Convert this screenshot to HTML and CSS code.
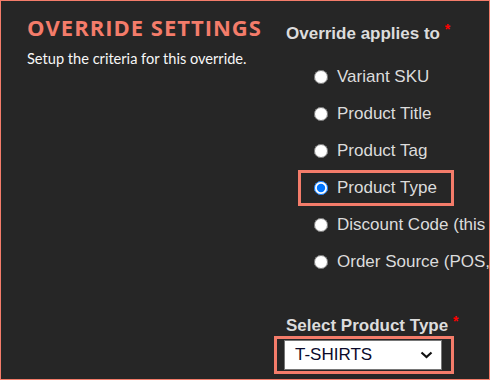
FILE: index.html
```html
<!DOCTYPE html>
<html lang="en">
<head>
    <meta charset="UTF-8">
    <meta name="viewport" content="width=device-width, initial-scale=1.0">
    <title>Override Settings</title>
    <link rel="stylesheet" href="styles.css">
</head>
<body>
    <div class="panel">
        <div class="intro">
            <h2>OVERRIDE SETTINGS</h2>
            <p>Setup the criteria for this override.</p>
        </div>

        <div class="form">
            <div class="field-label">Override applies to <span class="req">*</span></div>
            <ul class="options">
                <li><label><input type="radio" name="applies"> Variant SKU</label></li>
                <li><label><input type="radio" name="applies"> Product Title</label></li>
                <li><label><input type="radio" name="applies"> Product Tag</label></li>
                <li class="marked"><label><input type="radio" name="applies" checked> Product Type</label></li>
                <li><label><input type="radio" name="applies"> Discount Code (this</label></li>
                <li><label><input type="radio" name="applies"> Order Source (POS,</label></li>
            </ul>

            <div class="field-label select-label">Select Product Type <span class="req">*</span></div>
            <div class="select-box">
                <div class="select">
                    <span>T-SHIRTS</span>
                    <svg width="13" height="8" viewBox="0 0 13 8"><path d="M1.5 1.5 L6.5 6 L11.5 1.5" fill="none" stroke="#111" stroke-width="2.2"/></svg>
                </div>
            </div>
        </div>
    </div>
</body>
</html>
```

FILE: styles.css
```css
* {
    margin: 0;
    padding: 0;
    box-sizing: border-box;
}

body {
    background: #262626;
}

/* Outer frame */
.panel {
    width: 490px;
    height: 380px;
    border: 1px solid #f47c6a;
    background: #262626;
    display: flex;
    overflow: hidden;
}

.intro {
    width: 284px;
    flex-shrink: 0;
    padding: 11px 0 0 26px;
}

.intro h2 {
    font-family: 'Open Sans', sans-serif;
    font-weight: 700;
    font-size: 22px;
    line-height: 30px;
    letter-spacing: 1px;
    color: #f47c6a;
}

.intro p {
    margin-top: 8px;
    font-family: 'Lato', sans-serif;
    font-size: 14.6px;
    line-height: 18px;
    color: #f7f7f7;
}

/* Right column */
.form {
    padding-top: 23px;
    font-family: 'Liberation Sans', Arial, sans-serif;
    font-size: 17px;
    color: #dcdcdc;
    white-space: nowrap;
}

.field-label {
    font-weight: bold;
    line-height: 20px;
    height: 20px;
    padding-left: 1px;
}

.req {
    color: #ff0000;
    font-size: 14px;
    position: relative;
    top: -5px;
}

.options {
    list-style: none;
    margin-top: 15px;
    padding-left: 13px;
}

.options li {
    width: 156px;
    height: 36px;
    margin-bottom: 1px;
    border: 3px solid transparent;
    display: flex;
    align-items: center;
    padding-left: 9px;
}

.options li.marked {
    border-color: #f47c6a;
}

.options label {
    display: flex;
    align-items: center;
}

.options input {
    width: 14px;
    height: 14px;
    margin: 0 9px 0 4px;
}

.select-label {
    margin-top: 36px;
}

.select-box {
    display: inline-block;
    margin-left: -11px;
    border: 3px solid #f47c6a;
    padding: 1px 9px 1px 7px;
}

.select {
    width: 158px;
    height: 30px;
    background: #fff;
    border: 1px solid #767676;
    display: flex;
    align-items: center;
    justify-content: space-between;
    padding: 0 8px 0 10px;
    color: #0a0a2a;
}
```
